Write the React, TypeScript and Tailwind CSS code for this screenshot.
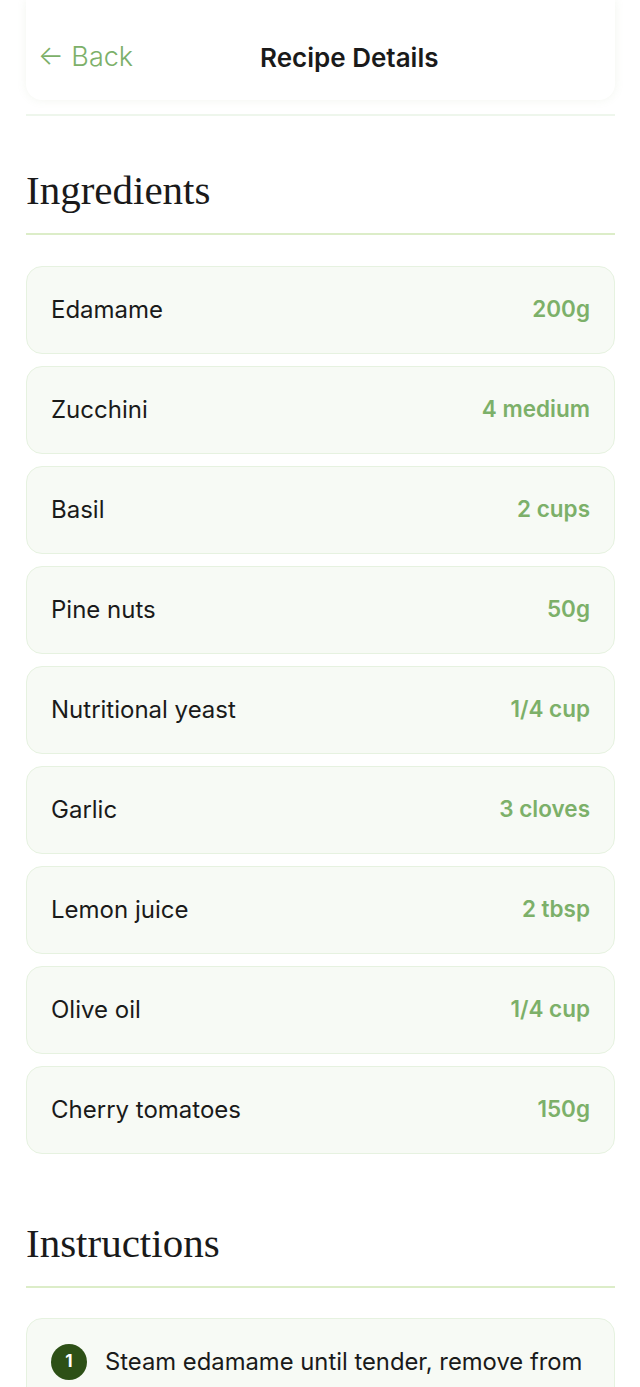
const ingredients = [
  { name: 'Edamame', amount: '200g' },
  { name: 'Zucchini', amount: '4 medium' },
  { name: 'Basil', amount: '2 cups' },
  { name: 'Pine nuts', amount: '50g' },
  { name: 'Nutritional yeast', amount: '1/4 cup' },
  { name: 'Garlic', amount: '3 cloves' },
  { name: 'Lemon juice', amount: '2 tbsp' },
  { name: 'Olive oil', amount: '1/4 cup' },
  { name: 'Cherry tomatoes', amount: '150g' },
];

const steps = [
  'Steam edamame until tender, remove from pods and set aside to cool.',
  'Spiralize the zucchini into noodles and pat them dry.',
];

function SectionTitle({ children }: { children: string }) {
  return (
    <h2 className="border-b-2 border-[#dcedc8] pb-[19px] font-['Liberation_Serif',serif] text-[41px] leading-[48px] text-[#1a1a1a]">
      {children}
    </h2>
  );
}

export default function App() {
  return (
    <div className="min-h-screen bg-white pl-[26px] pr-[25px] font-['Inter',sans-serif] text-[#1a1a1a]">
      <header className="flex h-[100px] items-center rounded-b-2xl bg-white px-3 pt-[14px] shadow-[0_0_10px_rgba(150,170,120,0.12)]">
        <button className="text-[27px] font-light text-[#7cb069]">← Back</button>
        <h1 className="ml-[127px] text-[26px] font-semibold">Recipe Details</h1>
      </header>
      <div className="mt-[14px] h-[2px] bg-[#eef6ec]" />

      <section className="mt-[50px]">
        <SectionTitle>Ingredients</SectionTitle>
        <div className="mt-[31px] flex flex-col gap-3">
          {ingredients.map((item) => (
            <div
              key={item.name}
              className="flex h-[88px] items-center justify-between rounded-2xl border border-[#e6f2e0] bg-[#f7faf5] px-6"
            >
              <span className="text-[24px]">{item.name}</span>
              <span className="-mt-[2px] text-[22.5px] font-semibold text-[#7cb069]">{item.amount}</span>
            </div>
          ))}
        </div>
      </section>

      <section className="mt-[65px] pb-10">
        <SectionTitle>Instructions</SectionTitle>
        <div className="mt-[30px] flex flex-col gap-3">
          {steps.map((step, i) => (
            <div
              key={i}
              className="flex items-start gap-[18px] rounded-2xl border border-[#e6f2e0] bg-[#f7faf5] px-6 py-[25px]"
            >
              <span className="flex h-9 w-9 shrink-0 items-center justify-center rounded-full bg-[#2d5016] text-[17px] font-bold text-white">
                {i + 1}
              </span>
              <p className="text-[23.8px] leading-[36px]">{step}</p>
            </div>
          ))}
        </div>
      </section>
    </div>
  );
}
